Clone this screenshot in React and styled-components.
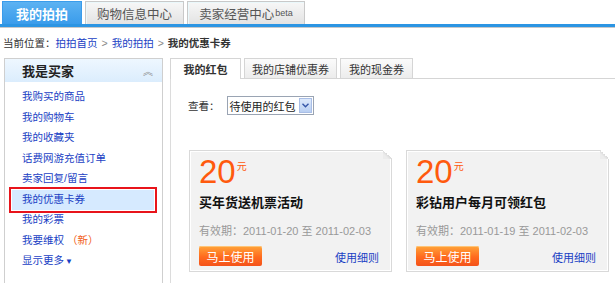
import React from "react";
import styled, { createGlobalStyle } from "styled-components";

const GlobalStyle = createGlobalStyle`
  body {
    margin: 0;
    background: #fff;
    font-family: "Liberation Sans", "Noto Sans CJK SC", sans-serif;
    color: #333;
  }
`;

const Page = styled.div`
  width: 615px;
  height: 283px;
  overflow: hidden;
`;

const TopNav = styled.div`
  display: flex;
  align-items: flex-end;
  gap: 3px;
  height: 24px;
  padding-left: 2px;
  border-bottom: 3px solid #2c95e3;
  box-shadow: 0 1px 0 #c8c8c8;
`;

const TopTab = styled.div`
  height: 23px;
  width: ${(p) => p.w}px;
  box-sizing: border-box;
  display: flex;
  align-items: center;
  justify-content: center;
  font-size: ${(p) => (p.active ? 13 : 12.5)}px;
  font-weight: ${(p) => (p.active ? "bold" : "normal")};
  color: ${(p) => (p.active ? "#fff" : "#555")};
  background: ${(p) =>
    p.active
      ? "linear-gradient(#5cb2f2, #3a9ceb)"
      : "linear-gradient(#f7f7f7, #e3e3e3)"};
  border: 1px solid ${(p) => (p.active ? "#3a9ceb" : "#c9c9c9")};
  border-bottom: none;
  box-shadow: ${(p) => (p.active ? "none" : "inset 1px 1px 0 #eaf8fb")};

  sup {
    font-size: 9px;
    vertical-align: 5px;
    margin-left: 1px;
  }
`;

const Crumbs = styled.div`
  height: 31px;
  line-height: 32px;
  padding-left: 3px;
  font-size: 10.5px;
  color: #333;
`;

const CrumbLink = styled.span`
  color: #1a3fc4;
`;

const CrumbSep = styled.span`
  color: #888;
  margin: 0 4px;
`;

const CrumbNow = styled.span`
  font-weight: bold;
  color: #333;
`;

const Main = styled.div`
  display: flex;
  align-items: flex-start;
  padding-left: 4px;
  gap: 7px;
`;

const Sidebar = styled.div`
  width: 159px;
  height: 240px;
  box-sizing: border-box;
  border: 1px solid #cfcfcf;
  border-bottom: none;
`;

const SideHead = styled.div`
  height: 23px;
  display: flex;
  align-items: center;
  justify-content: space-between;
  padding: 0 9px 0 17px;
  background: linear-gradient(#eef7ff, #dbedfd);
  font-size: 13px;
  font-weight: bold;
  color: #222;
`;

const Collapse = styled.span`
  font-size: 10px;
  color: #888;
  font-weight: normal;
`;

const SideList = styled.div`
  padding-top: 4px;
`;

const SideItem = styled.div`
  position: relative;
  height: 20.5px;
  line-height: 20.5px;
  padding-left: 17px;
  font-size: 10.5px;
  color: #1a3fc4;

  ${(p) =>
    p.current &&
    `
    &::before {
      content: "";
      position: absolute;
      left: 4px;
      right: 5px;
      top: -2px;
      bottom: -4px;
      border: 2px solid #e8141b;
      background: #d6eaff;
      box-shadow: inset 0 0 0 1px #fff;
      z-index: -1;
    }
  `}
`;

const New = styled.span`
  color: #f2621a;
  margin-left: 3px;
`;

const MoreArrow = styled.span`
  font-size: 8px;
  margin-left: 1px;
  color: #1a3fc4;
`;

const Content = styled.div`
  flex: 1;
  display: flex;
  flex-direction: column;
`;

const SubTabs = styled.div`
  display: flex;
  gap: 3px;
  height: 20px;
  border-bottom: 1px solid #d5d5d5;
`;

const SubTab = styled.div`
  width: ${(p) => p.w}px;
  box-sizing: border-box;
  height: ${(p) => (p.active ? 21 : 20)}px;
  display: flex;
  align-items: center;
  justify-content: center;
  font-size: 11px;
  font-weight: ${(p) => (p.active ? "bold" : "normal")};
  color: #333;
  background: ${(p) => (p.active ? "#fff" : "linear-gradient(#fbfbfb, #ececec)")};
  border: 1px solid #d5d5d5;
  border-bottom: none;
`;

const Panel = styled.div`
  border-left: 1px solid #dcdcdc;
  height: 210px;
  padding: 17px 0 0 17px;
`;

const FilterRow = styled.div`
  display: flex;
  align-items: center;
  font-size: 10.5px;
  color: #333;
  gap: 7px;
`;

const SelectBox = styled.div`
  width: 87px;
  height: 19px;
  box-sizing: border-box;
  border: 1px solid #9aa4b3;
  display: flex;
  align-items: center;
  justify-content: space-between;
  padding: 0 1px 0 2px;
  font-size: 11px;
  color: #222;
  background: #fff;
`;

const SelectArrow = styled.span`
  width: 13px;
  height: 15px;
  background: linear-gradient(#dde9fb, #b9cff2);
  border: 1px solid #a9bee6;
  box-sizing: border-box;
  display: flex;
  align-items: center;
  justify-content: center;
`;

const Cards = styled.div`
  display: flex;
  gap: 14px;
  margin-top: 35px;
  margin-left: 1px;
`;

const Card = styled.div`
  position: relative;
  width: 203px;
  height: 122px;
  box-sizing: border-box;
  background: #f2f2f2;
  border: 1px solid #d9d9d9;
  box-shadow: inset 0 0 0 1px #fff;
  padding: 4px 12px 0 9px;

  &::after {
    content: "";
    position: absolute;
    top: -1px;
    right: -1px;
    width: 9px;
    height: 9px;
    background: linear-gradient(to bottom left, #fff 50%, #dcdcdc 50%, #ececec 70%);
  }
`;

const Amount = styled.div`
  display: flex;
  align-items: flex-start;
  color: #ff5a0e;
  height: 32px;
`;

const Num = styled.span`
  font-size: 33px;
  line-height: 33px;
  font-family: "Liberation Sans", sans-serif;
`;

const Unit = styled.span`
  font-size: 10px;
  margin-top: 3px;
  margin-left: 1px;
`;

const CardTitle = styled.div`
  margin-top: 6px;
  font-size: 13px;
  font-weight: bold;
  color: #111;
  line-height: 20px;
`;

const Valid = styled.div`
  margin-top: 11px;
  font-size: 11px;
  color: #999;
  line-height: 14px;
`;

const CardFoot = styled.div`
  display: flex;
  justify-content: space-between;
  align-items: flex-end;
  margin-top: 8px;
`;

const UseButton = styled.div`
  width: 63px;
  height: 20px;
  border-radius: 2px;
  background: linear-gradient(#ffa43a, #ff6a1e 55%, #f4521a);
  color: #fff;
  font-size: 12px;
  display: flex;
  align-items: center;
  justify-content: center;
  box-shadow: inset 0 1px 0 #ffc477;
`;

const RuleLink = styled.span`
  font-size: 11px;
  color: #1a3fc4;
  margin-bottom: 1px;
`;

const coupons = [
  { title: "买年货送机票活动", from: "2011-01-20", to: "2011-02-03" },
  { title: "彩钻用户每月可领红包", from: "2011-01-19", to: "2011-02-03" },
];

const menu = [
  "我购买的商品",
  "我的购物车",
  "我的收藏夹",
  "话费网游充值订单",
  "卖家回复/留言",
];

const App = () => {
  return (
    <Page>
      <GlobalStyle />
      <TopNav>
        <TopTab active w={80}>我的拍拍</TopTab>
        <TopTab w={99}>购物信息中心</TopTab>
        <TopTab w={118}>
          卖家经营中心<sup>beta</sup>
        </TopTab>
      </TopNav>
      <Crumbs>
        当前位置：<CrumbLink>拍拍首页</CrumbLink>
        <CrumbSep>&gt;</CrumbSep>
        <CrumbLink>我的拍拍</CrumbLink>
        <CrumbSep>&gt;</CrumbSep>
        <CrumbNow>我的优惠卡券</CrumbNow>
      </Crumbs>
      <Main>
        <Sidebar>
          <SideHead>
            我是买家
            <Collapse>︽</Collapse>
          </SideHead>
          <SideList>
            {menu.map((m) => (
              <SideItem key={m}>{m}</SideItem>
            ))}
            <SideItem current>我的优惠卡券</SideItem>
            <SideItem>我的彩票</SideItem>
            <SideItem>
              我要维权<New>（新）</New>
            </SideItem>
            <SideItem>
              显示更多<MoreArrow>▼</MoreArrow>
            </SideItem>
          </SideList>
        </Sidebar>
        <Content>
          <SubTabs>
            <SubTab active w={71}>我的红包</SubTab>
            <SubTab w={93}>我的店铺优惠券</SubTab>
            <SubTab w={73}>我的现金券</SubTab>
          </SubTabs>
          <Panel>
            <FilterRow>
              查看：
              <SelectBox>
                待使用的红包
                <SelectArrow>
                  <svg width="7" height="5" viewBox="0 0 7 5">
                    <path d="M0.5 0.8 L3.5 3.8 L6.5 0.8" fill="none" stroke="#3556a8" strokeWidth="1.4" />
                  </svg>
                </SelectArrow>
              </SelectBox>
            </FilterRow>
            <Cards>
              {coupons.map((c) => (
                <Card key={c.title}>
                  <Amount>
                    <Num>20</Num>
                    <Unit>元</Unit>
                  </Amount>
                  <CardTitle>{c.title}</CardTitle>
                  <Valid>
                    有效期：{c.from} 至 {c.to}
                  </Valid>
                  <CardFoot>
                    <UseButton>马上使用</UseButton>
                    <RuleLink>使用细则</RuleLink>
                  </CardFoot>
                </Card>
              ))}
            </Cards>
          </Panel>
        </Content>
      </Main>
    </Page>
  );
};

export default App;
